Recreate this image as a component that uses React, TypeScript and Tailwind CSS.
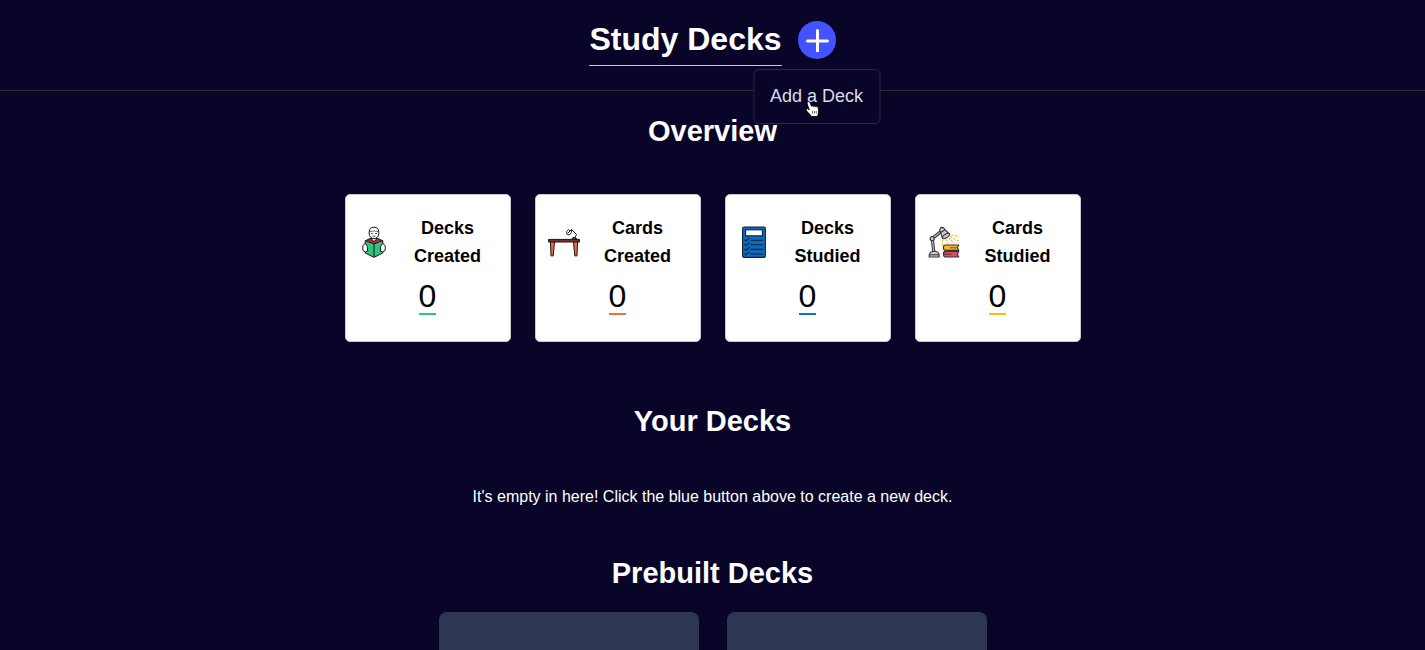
import type { ReactNode } from "react";

const ReaderIcon = () => (
  <svg viewBox="0 0 32 32" className="h-8 w-8" aria-hidden="true" fill="#fff" stroke="#1a1a1a" strokeWidth="1" strokeLinejoin="round">
    <path d="M10.8 13 L14 12 H18 L21.2 13 L24 14.5 L24 18 H8 V14.5 Z" fill="#b8263c" />
    <path d="M14 10.5 H18 V14 L16 15.4 L14 14 Z" />
    <path d="M11.2 6 C11.2 2.7 13 1.2 16 1.2 S20.8 2.7 20.8 6 V8 C20.8 10.5 18.5 12.6 16 12.6 S11.2 10.5 11.2 8 Z" />
    <path d="M11.4 5.6 Q16 4.4 20.6 5.6" fill="none" strokeWidth=".6" />
    <path d="M13 7.6 H14.8 M17.2 7.6 H19 M14.6 10.2 H17.4" strokeWidth=".8" />
    <path d="M16 18 L7.2 14.5 V27 L16 31.4 L24.8 27 V14.5 Z" fill="#2fc47c" />
    <path d="M16 18 V31" />
    <path d="M7.4 17.4 L4.8 19.5 V24.3 L7.6 26 L9.6 25 L9.4 20.5 Z" />
    <path d="M24.6 17.4 L27.2 19.5 V24.3 L24.4 26 L22.4 25 L22.6 20.5 Z" />
  </svg>
);

const DeskIcon = () => (
  <svg viewBox="0 0 32 32" className="h-8 w-8" aria-hidden="true" stroke="#1a1a1a" strokeWidth="1" strokeLinejoin="round">
    <path d="M2.4 15.5 H6.6 L5.2 29.9 H3 Z M25.4 15.5 H29.6 L29 29.9 H26.8 Z" fill="#ef6a43" />
    <rect x=".5" y="13.4" width="31" height="2.6" fill="#7b3023" />
    <path d="M24 13.1 Q24.2 11.4 26.3 11.4 T28.8 13.1 Z" fill="#555" />
    <path d="M26.8 11.4 L28.6 8.6 L23.6 3.4" fill="none" />
    <path d="M18.6 5.6 L20.6 3.6 L22 5 L23.8 3.6 L23.4 6.6 L21.6 8.8 L19.2 8.6 Z M20 7 L22 5" fill="#fff" />
  </svg>
);

const ChecklistIcon = () => (
  <svg viewBox="0 0 32 32" className="h-8 w-8" aria-hidden="true" fill="none" stroke="#12202e" strokeWidth="1.1">
    <rect x="4.6" y="1" width="22.8" height="30.4" rx="1.5" fill="#0b6ac4" />
    <rect x="7.6" y="3.8" width="16.8" height="6" fill="#fff" />
    <path d="M12.5 14.2 H25 M12.5 18.8 H25 M12.5 23.4 H25 M12.5 28 H25" />
    <path d="M6.5 13.6 L8 15 L11.6 11.8 M6.5 18.2 L8 19.6 L11.6 16.4 M6.5 22.8 L8 24.2 L11.6 21 M6.5 27.4 L8 28.8 L11.6 25.6" />
  </svg>
);

const LampIcon = () => (
  <svg viewBox="0 0 32 32" className="h-8 w-8" aria-hidden="true" stroke="#34373e" strokeWidth="1.1" strokeLinejoin="round" fill="#c9cbd0">
    <path d="M3.4 13 L4.6 25.6 H6.8 L5.4 13 Z M3.8 11.4 L12 5 L13.2 6.8 L5.4 13 Z" />
    <circle cx="4.2" cy="12.6" r="2.1" />
    <path d="M1.2 31 V28.8 Q2 25.2 6.2 25.2 T11.2 28.8 V31 Z" />
    <path d="M1.6 28.8 H11" />
    <path d="M11.6 4.2 L12.8 1.4 L15.4 1.6 L17 3.6 L21.2 8 L14.4 12.2 L12.8 7 Z" />
    <ellipse cx="18" cy="10" rx="4" ry="1.8" transform="rotate(-32 18 10)" />
    <path d="M12 7 L17 3.8" fill="none" />
    <g stroke="#fbb917" strokeWidth="1.2" strokeDasharray="2 1.5" fill="none">
      <path d="M23.5 9 L31 10.5 M22.5 10.5 L31 15.5 M20.8 12 L26.5 18 M18 13.5 L20.2 18 M14.5 14 V20" />
    </g>
    <path d="M30.8 19 H17.4 Q15.4 19 15.4 21.6 T17.4 24.4 H30.8 L29.4 21.6 Z" fill="#f9b620" />
    <path d="M30.8 25.4 H17.4 Q15.4 25.4 15.4 28 T17.4 31 H30.8 L29.4 28.2 Z" fill="#dd4f5a" />
    <path d="M22 21.8 H28.6 M16 28.2 H24" strokeWidth=".8" />
  </svg>
);

type Stat = { noun: string; verb: string; count: number; line: string; icon: ReactNode };

const stats: Stat[] = [
  { noun: "Decks", verb: "Created", count: 0, line: "border-[#2fc487]", icon: <ReaderIcon /> },
  { noun: "Cards", verb: "Created", count: 0, line: "border-[#f26b4b]", icon: <DeskIcon /> },
  { noun: "Decks", verb: "Studied", count: 0, line: "border-[#0b74d0]", icon: <ChecklistIcon /> },
  { noun: "Cards", verb: "Studied", count: 0, line: "border-[#fbb917]", icon: <LampIcon /> },
];

const StatCard = ({ noun, verb, count, line, icon }: Stat) => (
  <li className="w-[166px] rounded-[5px] border border-[#c8c8d0] bg-white pt-[19px] pb-[26px] text-center text-black">
    <div className="flex items-center pr-1 pl-3">
      {icon}
      <h3 className="flex-1 text-lg leading-7 font-bold">
        {noun}
        <br />
        {verb}
      </h3>
    </div>
    <p className={`mx-auto mt-2.5 w-fit border-b-2 pb-px text-[32px] leading-8 ${line}`}>{count}</p>
  </li>
);

const HandCursor = () => (
  <svg viewBox="0 0 14 16" className="pointer-events-none absolute top-[31px] left-[51px] h-4 w-3.5" aria-hidden="true">
    <path
      d="M2 1 C3 0 4.2 .7 4.6 1.8 L6 5.2 C6.6 4.6 7.5 4.8 8 5.5 C8.6 4.8 9.6 5 10 5.8 C11 5.2 12.6 5.6 12.8 7 L13.2 10 C13.3 12 12.4 13.2 12.2 15.4 H5.6 C5 13.5 2.4 11.8 .9 9.6 C.2 8.2 1.7 7.2 2.8 8 L3.8 9 L1.7 3 C1.4 2.2 1.5 1.5 2 1 Z"
      fill="#fff"
      stroke="#000"
      strokeWidth=".9"
    />
    <path d="M7 10 V12.6 M8.9 10 V12.6 M10.8 10 V12.6" stroke="#000" strokeWidth=".6" />
  </svg>
);

export default function App() {
  return (
    <div className="h-screen overflow-hidden bg-[#080529] font-['Liberation_Sans',Arial,sans-serif] text-white">
      <header className="flex justify-center gap-4 border-b border-[#2b2b33] pt-[21px] pb-6">
        <h1 className="h-[45px] border-b border-[#fbcb2e] text-[32px] leading-9 font-bold">Study Decks</h1>
        <div className="relative h-[38px]">
          <button
            type="button"
            aria-label="Add a Deck"
            aria-describedby="add-deck-tip"
            className="flex size-[38px] items-center justify-center rounded-full bg-[#4353ff]"
          >
            <svg viewBox="0 0 24 24" className="size-6" aria-hidden="true" stroke="#fff" strokeWidth="3" strokeLinecap="round">
              <path d="M12.5 2.5 V23 M2.5 13 H22.5" />
            </svg>
          </button>
          <div
            id="add-deck-tip"
            role="tooltip"
            className="absolute top-12 left-1/2 z-10 -translate-x-1/2 rounded-[5px] border border-[#2b2b3a] bg-[#080529] px-4 py-[13px] text-lg leading-[27px] whitespace-nowrap text-[#dcdce4]"
          >
            Add a Deck
            <HandCursor />
          </div>
        </div>
      </header>

      <main className="text-center">
        <section>
          <h2 className="pt-5 text-[29px] leading-10 font-bold">Overview</h2>
          <ul className="mt-[43px] flex justify-center gap-6">
            {stats.map((stat) => (
              <StatCard key={stat.noun + stat.verb} {...stat} />
            ))}
          </ul>
        </section>
        <section>
          <h2 className="mt-[59px] text-[29px] leading-10 font-bold">Your Decks</h2>
          <p className="mt-11 text-base leading-6">It's empty in here! Click the blue button above to create a new deck.</p>
        </section>
        <section>
          <h2 className="mt-11 text-[29px] leading-10 font-bold">Prebuilt Decks</h2>
          <div className="mt-[19px] flex justify-center gap-7">
            <article className="h-40 w-[260px] rounded-lg bg-[#2d3753]" />
            <article className="h-40 w-[260px] rounded-lg bg-[#2d3753]" />
          </div>
        </section>
      </main>
    </div>
  );
}
